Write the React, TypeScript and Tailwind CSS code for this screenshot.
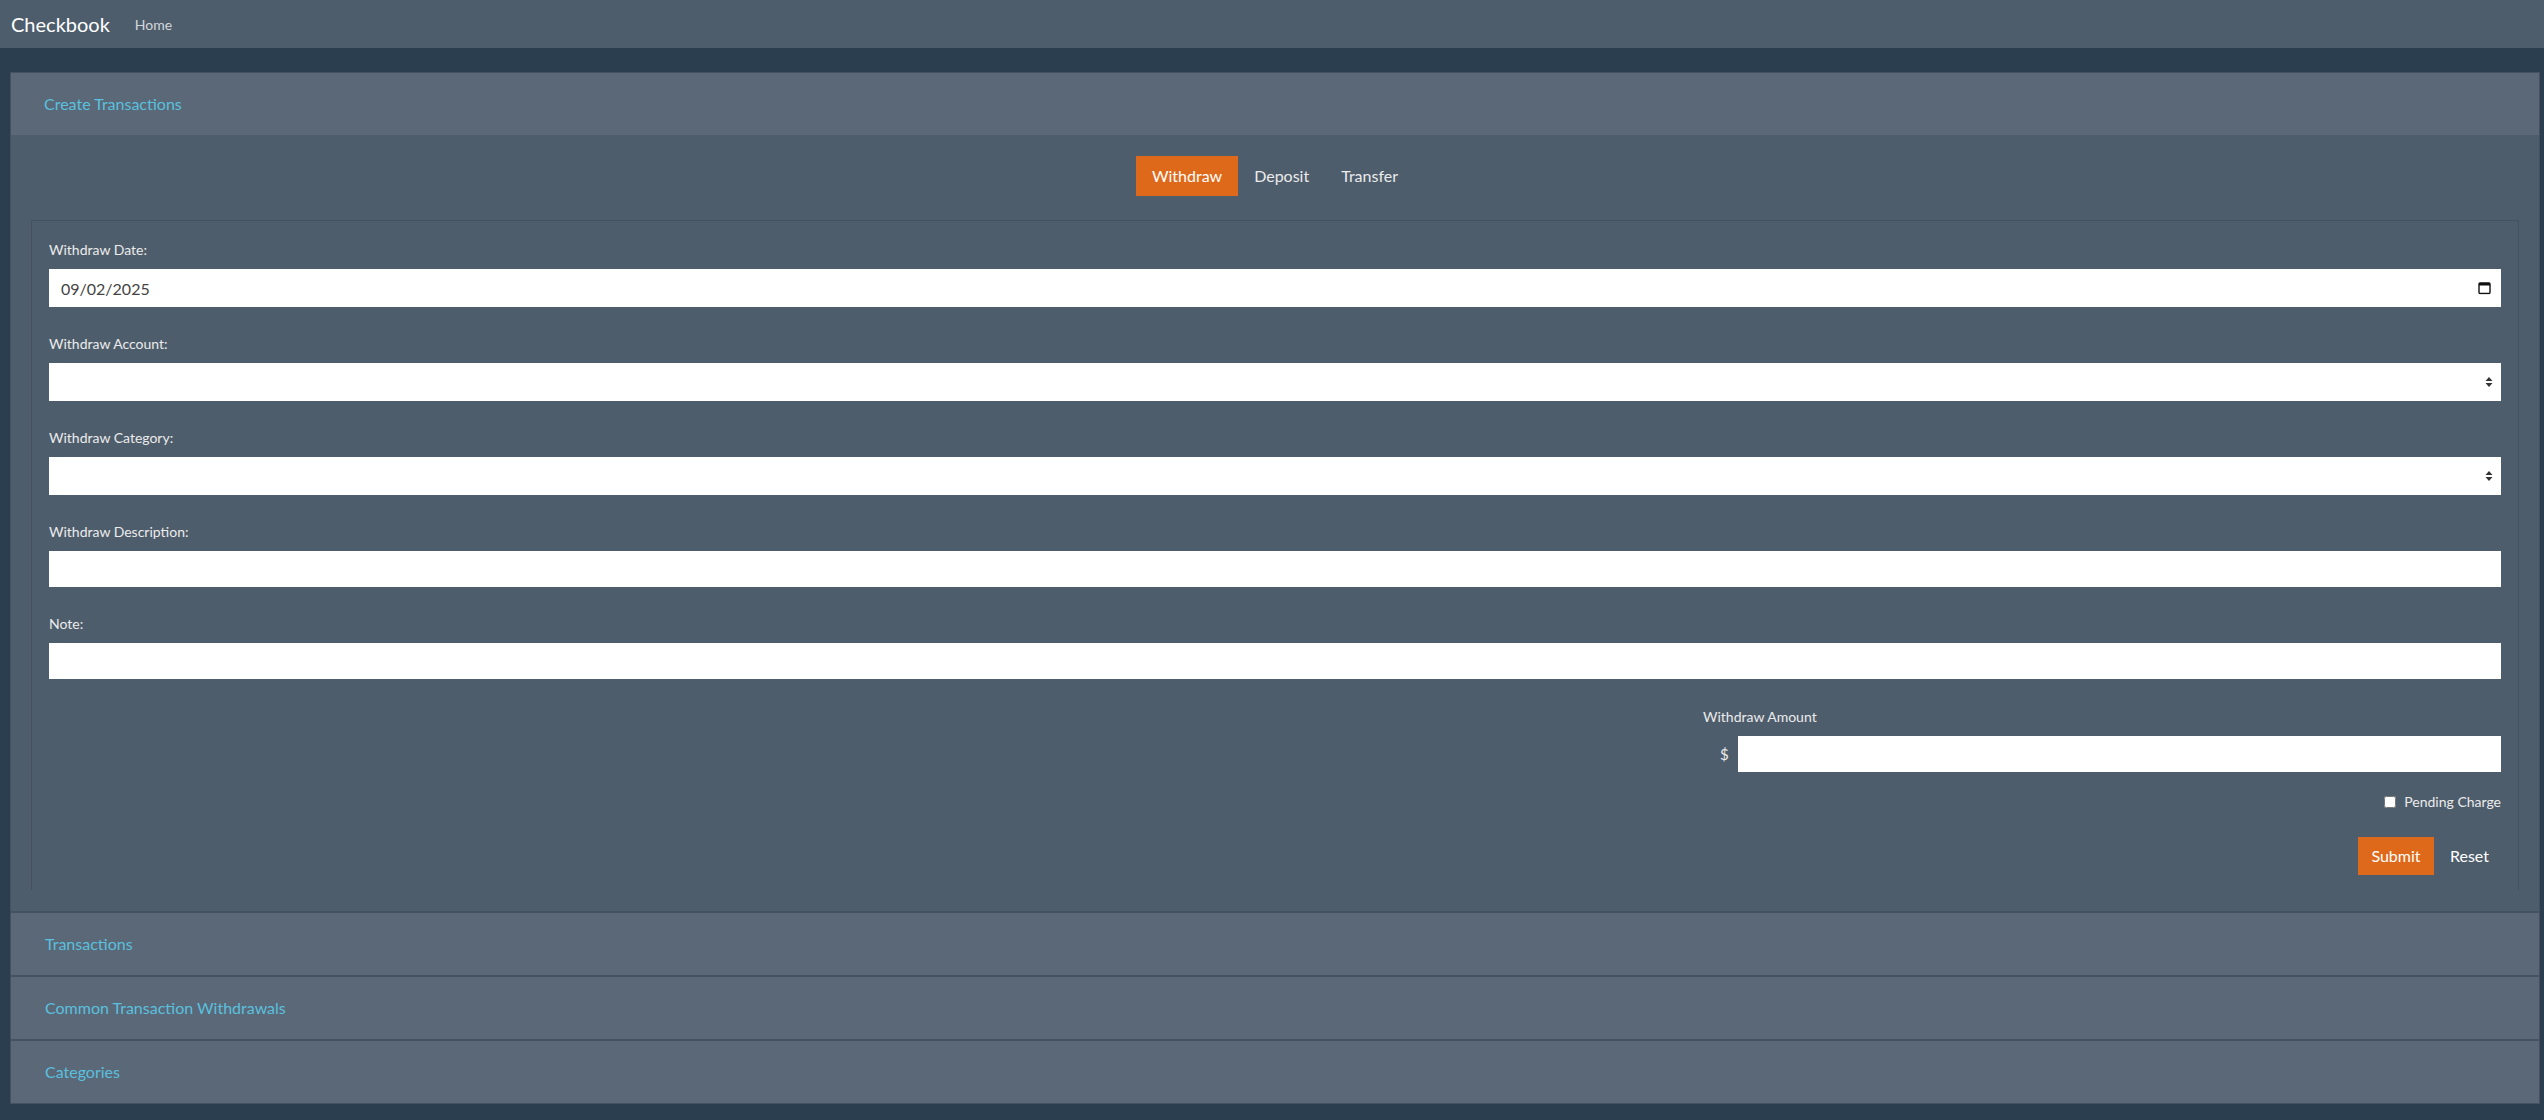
import React, { useState } from 'react';

const sections = ['Transactions', 'Common Transaction Withdrawals', 'Categories'];

const Field: React.FC<{ label: string; children: React.ReactNode; last?: boolean }> = ({ label, children, last }) => (
  <div className={last ? '' : 'mb-[27px]'}>
    <label className="block text-[14px] leading-[20px] text-[#ebebeb] mb-[9px]">{label}</label>
    {children}
  </div>
);

const SelectArrows: React.FC = () => (
  <svg width="8" height="12" viewBox="0 0 8 12" className="absolute right-[8px] top-1/2 -translate-y-1/2">
    <path d="M4 1 L7.5 5 H0.5 Z" fill="#333" />
    <path d="M4 11 L7.5 7 H0.5 Z" fill="#333" />
  </svg>
);

const App: React.FC = () => {
  const [tab, setTab] = useState<string>('Withdraw');
  const [pending, setPending] = useState<boolean>(false);

  return (
    <div className="min-h-[1120px] bg-[#2b3e50] font-['Lato','Liberation_Sans',sans-serif] text-[#ebebeb]">
      <nav className="h-[48px] bg-[#4e5d6c] flex items-center pl-[11px]">
        <span className="text-[20px] text-white mr-[25px]">Checkbook</span>
        <span className="text-[14px] text-[#d3d7db]">Home</span>
      </nav>

      <div className="ml-[10px] mr-[4px] mt-[24px]">
        <div className="border border-[#44515e] bg-[#4e5d6c]">
          <div className="h-[62px] bg-[#5a6878] flex items-center pl-[33px] text-[16px] text-[#5bc0de]">
            Create Transactions
          </div>
          <div className="px-[20px] pt-[21px] pb-[21px]">
            <div className="flex justify-center">
              {['Withdraw', 'Deposit', 'Transfer'].map((t) => (
                <button
                  key={t}
                  onClick={() => setTab(t)}
                  className={
                    'h-[40px] px-[16px] text-[16px] ' +
                    (tab === t ? 'bg-[#df691a] text-white' : 'text-[#ebebeb]')
                  }
                >
                  {t}
                </button>
              ))}
            </div>

            <div className="mt-[24px] border-l border-t border-r border-[#44515e] px-[17px] pt-[19px] pb-[15px]">
              <Field label="Withdraw Date:">
                <div className="relative">
                  <input
                    type="text"
                    defaultValue="09/02/2025"
                    className="w-full h-[38px] bg-white px-[12px] text-[16px] text-[#444] outline-none"
                  />
                  <svg width="13" height="13" viewBox="0 0 13 13" className="absolute right-[10px] top-1/2 -translate-y-1/2">
                    <rect x="1" y="1.5" width="11" height="10.5" rx="1" fill="none" stroke="#111" strokeWidth="1.4" />
                    <rect x="1" y="1.5" width="11" height="2.5" fill="#111" />
                  </svg>
                </div>
              </Field>
              <Field label="Withdraw Account:">
                <div className="relative">
                  <div className="w-full h-[38px] bg-white" />
                  <SelectArrows />
                </div>
              </Field>
              <Field label="Withdraw Category:">
                <div className="relative">
                  <div className="w-full h-[38px] bg-white" />
                  <SelectArrows />
                </div>
              </Field>
              <Field label="Withdraw Description:">
                <input type="text" className="w-full h-[36px] bg-white px-[12px] outline-none" />
              </Field>
              <Field label="Note:" last>
                <input type="text" className="w-full h-[36px] bg-white px-[12px] outline-none" />
              </Field>

              <div className="flex justify-end mt-[28px]">
                <div className="w-[798px]">
                  <div className="text-[14px] leading-[20px] mb-[9px]">Withdraw Amount</div>
                  <div className="flex items-center">
                    <span className="text-[15px] w-[35px] pl-[17px]">$</span>
                    <input type="text" className="flex-1 h-[36px] bg-white px-[12px] outline-none" />
                  </div>
                  <label className="flex items-center justify-end mt-[20px] text-[14px] leading-[20px]">
                    <input
                      type="checkbox"
                      checked={pending}
                      onChange={(e) => setPending(e.target.checked)}
                      className="w-[12px] h-[12px] mr-[8px]"
                    />
                    Pending Charge
                  </label>
                  <div className="flex justify-end items-center mt-[25px] -mr-[4px]">
                    <button className="h-[38px] w-[76px] bg-[#df691a] text-white text-[16px]">Submit</button>
                    <button className="h-[38px] px-[16px] text-white text-[16px]">Reset</button>
                  </div>
                </div>
              </div>
            </div>
          </div>
        </div>

        {sections.map((s) => (
          <div key={s} className="border border-[#44515e] border-t-2 -mt-px bg-[#5a6878] h-[65px] flex items-center pl-[34px] text-[16px] text-[#5bc0de]">
            {s}
          </div>
        ))}
      </div>
    </div>
  );
};

export default App;
